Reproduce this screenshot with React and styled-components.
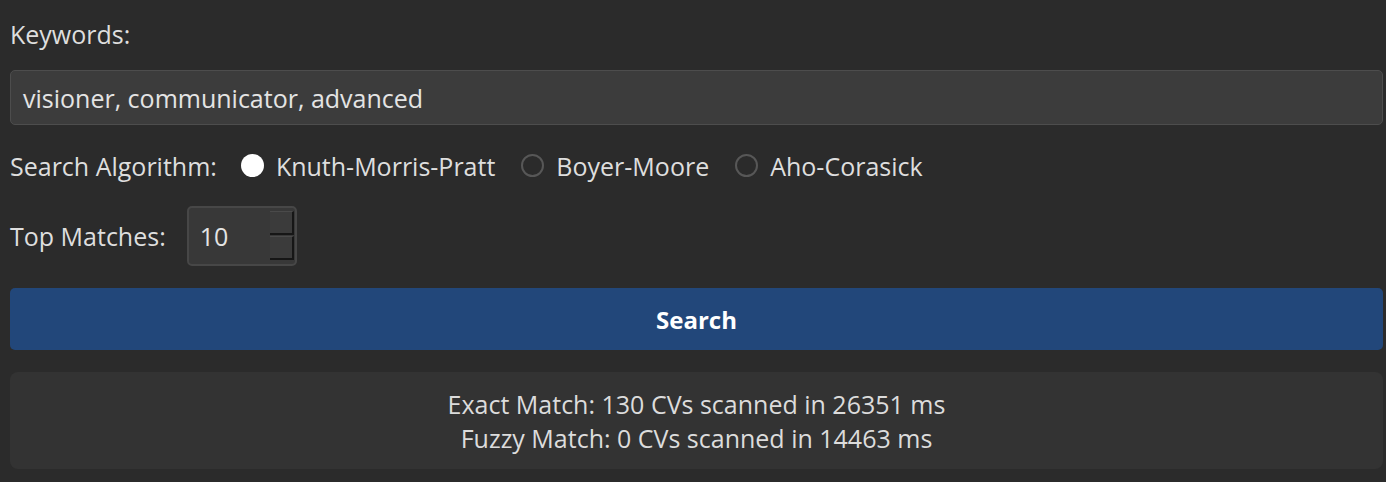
import styled, { createGlobalStyle } from "styled-components";

const GlobalStyle = createGlobalStyle`
  html, body {
    margin: 0;
    padding: 0;
    background: #2b2b2b;
  }
  body {
    font-family: "Open Sans", "Noto Sans", sans-serif;
    color: #dedede;
  }
`;

const algorithms = ["Knuth-Morris-Pratt", "Boyer-Moore", "Aho-Corasick"];

function App() {
  return (
    <>
      <GlobalStyle />
      <Panel>
        <Label>Keywords:</Label>
        <TextField>visioner, communicator, advanced</TextField>

        <Row gap={24}>
          <Label>Search Algorithm:</Label>
          <RadioGroup>
            {algorithms.map((name, i) => (
              <RadioOption key={name}>
                <RadioDot checked={i === 0} />
                <span>{name}</span>
              </RadioOption>
            ))}
          </RadioGroup>
        </Row>

        <Row gap={21}>
          <Label>Top Matches:</Label>
          <SpinBox>
            <SpinValue>10</SpinValue>
            <SpinButtons>
              <SpinButton />
              <SpinButton />
            </SpinButtons>
          </SpinBox>
        </Row>

        <SearchButton>Search</SearchButton>

        <Results>
          <div>Exact Match: 130 CVs scanned in 26351 ms</div>
          <div>Fuzzy Match: 0 CVs scanned in 14463 ms</div>
        </Results>
      </Panel>
    </>
  );
}

const Panel = styled.div`
  display: flex;
  flex-direction: column;
  gap: 22px;
  padding: 20px 3px 12px 10px;
  font-size: 25px;
`;

const Label = styled.div`
  line-height: 28px;
  color: #dedede;
  white-space: nowrap;
`;

const TextField = styled.div`
  height: 55px;
  box-sizing: border-box;
  display: flex;
  align-items: center;
  padding: 0 12px;
  background: #3c3c3c;
  border: 1px solid #4d4d4d;
  border-radius: 5px;
  color: #e4e4e4;
`;

const Row = styled.div`
  display: flex;
  align-items: center;
  gap: ${(p) => p.gap}px;
  min-height: 37px;
`;

const RadioGroup = styled.div`
  display: flex;
  align-items: center;
  gap: 26px;
`;

const RadioOption = styled.label`
  display: flex;
  align-items: center;
  gap: 12px;
  line-height: 34px;
  white-space: nowrap;
`;

const RadioDot = styled.span`
  width: 23px;
  height: 23px;
  box-sizing: border-box;
  border-radius: 50%;
  background: ${(p) => (p.checked ? "#ffffff" : "transparent")};
  border: ${(p) => (p.checked ? "none" : "2px solid #575757")};
`;

const SpinBox = styled.div`
  width: 110px;
  height: 60px;
  box-sizing: border-box;
  display: flex;
  align-items: center;
  justify-content: space-between;
  padding: 3px 1px 4px 11px;
  background: #383838;
  border: 2px solid #474747;
  border-radius: 5px;
`;

const SpinValue = styled.span`
  color: #e4e4e4;
`;

const SpinButtons = styled.div`
  display: flex;
  flex-direction: column;
  gap: 1px;
  align-self: stretch;
  width: 24px;
`;

const SpinButton = styled.div`
  flex: 1;
  background: #3b3b3b;
  border-right: 2px solid #161616;
  border-bottom: 2px solid #161616;
  border-top: 1px solid #4a4a4a;
`;

const SearchButton = styled.button`
  height: 62px;
  border: none;
  border-radius: 5px;
  background: #22477a;
  color: #ffffff;
  font-family: "Open Sans", "Noto Sans", sans-serif;
  font-size: 24px;
  font-weight: 700;
`;

const Results = styled.div`
  height: 97px;
  box-sizing: border-box;
  display: flex;
  flex-direction: column;
  align-items: center;
  justify-content: center;
  background: #333333;
  border-radius: 8px;
  line-height: 34px;
  color: #dcdcdc;
`;

export default App;
